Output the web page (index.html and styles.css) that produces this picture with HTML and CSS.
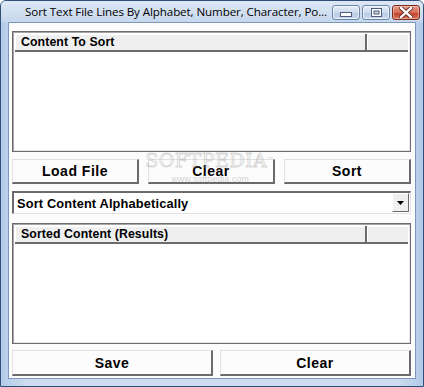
FILE: index.html
```html
<!DOCTYPE html>
<html>
<head>
<meta charset="utf-8">
<link rel="stylesheet" href="styles.css">
</head>
<body>
<div class="window">
  <div class="titlebar">
    <div class="title">Sort Text File Lines By Alphabet, Number, Character, Po...</div>
    <div class="caption-btns">
      <div class="cbtn cmin"><svg width="12" height="5" viewBox="0 0 12 5"><rect x="0.5" y="0.5" width="11" height="4" fill="#fff" stroke="#4b5d78"/></svg></div>
      <div class="cbtn cmax"><svg width="11" height="9" viewBox="0 0 11 9"><rect x="0.5" y="0.5" width="10" height="8" fill="#fff" stroke="#4b5d78"/><rect x="3" y="3" width="5" height="3" fill="#c8d7ea" stroke="#4b5d78" stroke-width="1"/></svg></div>
      <div class="cbtn cclose"><svg width="14" height="11" viewBox="0 0 14 11"><path d="M2 1 L12 10 M12 1 L2 10" stroke="#5a1a10" stroke-width="4" stroke-linecap="square"/><path d="M2 1 L12 10 M12 1 L2 10" stroke="#fff" stroke-width="2.4" stroke-linecap="square"/></svg></div>
    </div>
  </div>
  <div class="client">
    <div class="listview lv1">
      <div class="lv-header">
        <div class="col col-main">Content To Sort</div>
        <div class="col col-rest"></div>
      </div>
      <div class="lv-body"></div>
    </div>
    <div class="btn-row three">
      <div class="btn">Load File</div>
      <div class="btn">Clear</div>
      <div class="btn">Sort</div>
    </div>
    <div class="combo">
      <div class="combo-text">Sort Content Alphabetically</div>
      <div class="combo-arrow"><svg width="7" height="4" viewBox="0 0 7 4"><path d="M0 0 H7 L3.5 4 Z" fill="#000"/></svg></div>
    </div>
    <div class="listview lv2">
      <div class="lv-header">
        <div class="col col-main">Sorted Content (Results)</div>
        <div class="col col-rest"></div>
      </div>
      <div class="lv-body"></div>
    </div>
    <div class="btn-row two">
      <div class="btn btn-save">Save</div>
      <div class="btn">Clear</div>
    </div>
    <div class="watermark">
      <div class="wm-big">SOFTPEDIA<span class="tm">™</span></div>
      <div class="wm-small">www.softpedia.com</div>
    </div>
  </div>
</div>
</body>
</html>
```

FILE: styles.css
```css
* { box-sizing: border-box; }
html, body { margin: 0; padding: 0; }
body {
  width: 424px;
  height: 387px;
  overflow: hidden;
  background: #fff;
}
.window {
  width: 424px;
  height: 387px;
  display: flex;
  flex-direction: column;
  background: linear-gradient(to right, #b3cbe8, #cddcef 6%, #cddcef 94%, #b3cbe8);
  border: 1px solid #2f4e78;
  border-radius: 6px 6px 0 0;
  padding: 0 7px 7px 7px;
}
.titlebar {
  height: 21px;
  display: flex;
  align-items: flex-start;
  background: linear-gradient(to bottom, #dde8f5, #c6d7ec);
  margin: 0 -7px;
  padding: 0 7px;
  border-radius: 5px 5px 0 0;
}
.title {
  flex: 1;
  font-family: "Open Sans", "Noto Sans", sans-serif;
  font-size: 11.6px;
  color: #000;
  padding-left: 17px;
  padding-top: 3px;
  white-space: nowrap;
  letter-spacing: -0.1px;
}
.caption-btns {
  display: flex;
  gap: 2px;
  padding-top: 4px;
  margin-right: -4px;
}
.cbtn {
  height: 15px;
  border: 1px solid #6c86aa;
  border-radius: 3px;
  display: flex;
  align-items: center;
  justify-content: center;
  box-shadow: inset 0 0 0 1px rgba(255,255,255,0.6);
}
.cmin, .cmax {
  width: 28px;
  background: linear-gradient(to bottom, #e6eef8 0%, #ccdaec 50%, #b7cbe4 51%, #c8d8ec 100%);
}
.cmin svg { margin-top: 4px; }
.cclose {
  width: 28px;
  border-color: #7a2a1e;
  background: linear-gradient(to bottom, #e8a090 0%, #d56a55 50%, #c2412a 51%, #d0705a 100%);
  box-shadow: inset 0 0 0 1px rgba(255,220,210,0.5);
}
.client {
  position: relative;
  flex: 1;
  background: #fcfcfc;
  border: 1px solid #7e98bb;
  padding: 8px 4px 0 3px;
  display: flex;
  flex-direction: column;
}
.listview {
  height: 121px;
  border: 1px solid #6b6b6b;
  box-shadow: inset 1px 1px 0 #a6a6a6, inset -1px -1px 0 #e6e6e6;
  padding: 2px;
  display: flex;
  flex-direction: column;
  background: #fff;
}
.lv-header {
  height: 18px;
  display: flex;
  background: #efefef;
  border-bottom: 2px solid #6b6b6b;
  box-shadow: inset 1px 1px 0 #fff;
}
.col {
  font-family: "Liberation Sans", Arial, sans-serif;
  font-weight: bold;
  font-size: 12.3px;
  color: #000;
  padding: 1px 0 0 6px;
  white-space: nowrap;
  letter-spacing: 0.1px;
}
.col-main {
  width: 352px;
  border-right: 2px solid #6b6b6b;
}
.col-rest {
  flex: 1;
  box-shadow: inset 1px 0 0 #fff;
}
.lv-body { flex: 1; }
.btn-row {
  display: flex;
}
.btn-row.three { gap: 9px; height: 25px; margin-top: 7px; }
.btn-row.two { gap: 7px; height: 26px; margin-top: 6px; }
.btn {
  flex: 1;
  display: flex;
  align-items: center;
  justify-content: center;
  background: #fcfcfc;
  border-top: 1px solid #e2e2e2;
  border-left: 1px solid #e2e2e2;
  border-right: 2px solid #6b6b6b;
  border-bottom: 2px solid #6b6b6b;
  font-family: "Liberation Sans", Arial, sans-serif;
  font-weight: bold;
  font-size: 14px;
  letter-spacing: 0.5px;
  color: #000;
}
.btn-save { flex: 0 0 201px; }
.combo {
  margin-top: 7px;
  height: 23px;
  display: flex;
  align-items: stretch;
  border-top: 2px solid #6b6b6b;
  border-left: 2px solid #6b6b6b;
  border-right: 1px solid #e2e2e2;
  border-bottom: 1px solid #e2e2e2;
  background: #fff;
}
.combo-text {
  flex: 1;
  font-family: "Liberation Sans", Arial, sans-serif;
  font-weight: bold;
  font-size: 12.8px;
  letter-spacing: 0.15px;
  padding: 3px 0 0 3px;
  color: #000;
}
.combo-arrow {
  width: 17px;
  margin: 0 1px 1px 0;
  background: #efefef;
  border-top: 1px solid #fff;
  border-left: 1px solid #fff;
  border-right: 1px solid #6b6b6b;
  border-bottom: 1px solid #6b6b6b;
  display: flex;
  align-items: center;
  justify-content: center;
}
.lv2 { margin-top: 9px; }
.watermark {
  position: absolute;
  left: 131px;
  top: 126px;
  width: 140px;
  pointer-events: none;
  text-align: center;
}
.wm-big {
  font-family: "DejaVu Serif", "Liberation Serif", serif;
  font-size: 19px;
  letter-spacing: 0.5px;
  color: rgba(255,255,255,0);
  -webkit-text-stroke: 1px rgba(150,150,150,0.35);
  line-height: 22px;
}
.tm {
  font-size: 7px;
  vertical-align: top;
  -webkit-text-stroke: 0;
  color: rgba(150,150,150,0.4);
}
.wm-small {
  font-family: "Liberation Sans", Arial, sans-serif;
  font-size: 9px;
  color: rgba(150,150,150,0.45);
  margin-top: 3px;
}
```
